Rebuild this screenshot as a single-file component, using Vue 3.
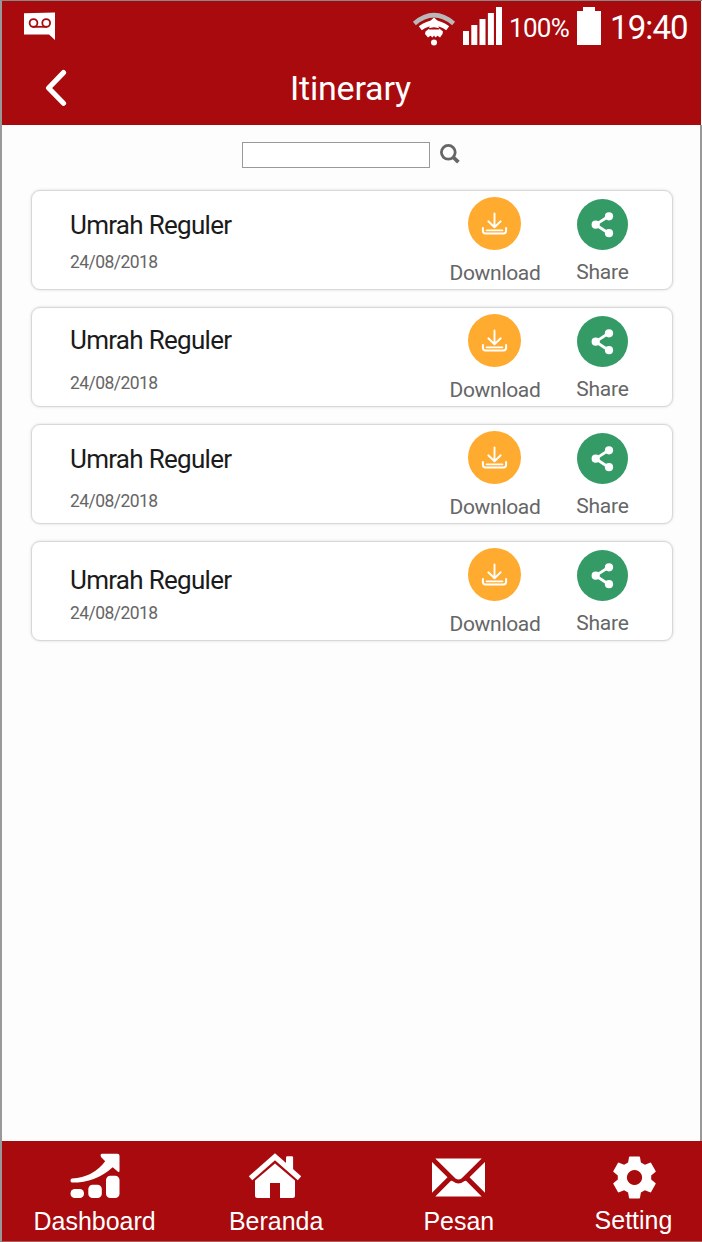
<script setup>
const items = [
  { title: 'Umrah Reguler', date: '24/08/2018', top: 21, gap: 14 },
  { title: 'Umrah Reguler', date: '24/08/2018', top: 19, gap: 20 },
  { title: 'Umrah Reguler', date: '24/08/2018', top: 21, gap: 19 },
  { title: 'Umrah Reguler', date: '24/08/2018', top: 25, gap: 10 },
]
</script>

<template>
  <div class="phone">
    <header class="top">
      <div class="status">
        <svg class="voicemail" width="31" height="29" viewBox="0 0 31 29">
          <path d="M0 1.2 31 0.5V28L25 22.6H0Z" fill="#fff" />
          <g fill="none" stroke="#a80a0e" stroke-width="1.8">
            <circle cx="9.5" cy="11" r="3.9" />
            <circle cx="22.2" cy="11" r="3.9" />
            <path d="M8.5 14.8H23" />
          </g>
        </svg>
        <svg class="wifi" width="44" height="36" viewBox="0 0 44 36">
          <path d="M2.4 13.4Q22-3.1 41.6 13.4" fill="none" stroke="#b9b9b9" stroke-width="4.6" />
          <path d="M8.3 18.3Q22 8 35.7 18.3" fill="none" stroke="#fff" stroke-width="5" />
          <path d="M22 7.5 28 13H16ZM18 14.5H26L27 18.2 31 21.5 30.5 24 28 27.5 25.5 25.8 23.5 27.5 22 25.6 20.5 27.5 18.5 25.8 16 27.5 13 24 13.5 21.5 17 18.8Z" fill="#fff" />
          <path d="M16.5 18.2 22 17.2 27.5 18.2 26.8 19.4H17.2Z" fill="#a80a0e" />
          <circle cx="22" cy="32.4" r="3" fill="#fff" />
        </svg>
        <svg class="signal" width="40" height="38" viewBox="0 0 40 38" fill="#fff">
          <path d="M0 24h6v14H0zM8.3 18h6v20h-6zM16.5 12h6v26h-6zM24.9 6h6v32h-6zM33 0h6v38h-6z" />
        </svg>
        <span class="percent">100%</span>
        <svg class="battery" width="24" height="38" viewBox="0 0 24 38" fill="#fff">
          <path d="M6 0h12v4h6v34H0V4h6z" />
        </svg>
        <span class="clock">19:40</span>
      </div>
      <div class="titlebar">
        <svg class="back" width="22" height="38" viewBox="0 0 22 38">
          <path d="M18.5 3.6 3.6 19 18.5 34.2" fill="none" stroke="#fff" stroke-width="5.2" stroke-linecap="round" stroke-linejoin="round" />
        </svg>
        <h1>Itinerary</h1>
      </div>
    </header>

    <main>
      <div class="search">
        <input type="text" aria-label="Search" />
        <svg width="20" height="20" viewBox="0 0 20 20" fill="none" stroke="#666">
          <circle cx="8.3" cy="8.3" r="6.9" stroke-width="2.8" />
          <path d="m13 13 5.4 5.2" stroke-width="3.8" />
        </svg>
      </div>

      <section class="list">
        <article v-for="(item, i) in items" :key="i" class="card">
          <div class="info" :style="{ paddingTop: item.top + 'px', rowGap: item.gap + 'px' }">
            <h2>{{ item.title }}</h2>
            <time>{{ item.date }}</time>
          </div>
          <div class="action download">
            <svg width="53" height="53" viewBox="0 0 53 53">
              <circle cx="26.5" cy="26.5" r="26.5" fill="#ffab30" />
              <g fill="none" stroke="#fff" stroke-linecap="round" stroke-linejoin="round">
                <path d="M26.5 16.5v13M20.3 24.3l6.2 6 6.2-6" stroke-width="1.9" />
                <path d="M14.9 31v2.8q0 2.6 2.6 2.6h18q2.6 0 2.6-2.6V31" stroke-width="2" />
                <path d="M18.5 33.4h16" stroke-width="1.6" />
              </g>
            </svg>
            <span>Download</span>
          </div>
          <div class="action share">
            <svg width="51" height="51" viewBox="0 0 51 51">
              <circle cx="25.5" cy="25.5" r="25.5" fill="#349b66" />
              <g fill="#fff">
                <path d="M32 17 18.7 25.7 32 34.5" fill="none" stroke="#fff" stroke-width="2.8" />
                <circle cx="18.7" cy="25.7" r="4.1" />
                <circle cx="32" cy="17.3" r="4.1" />
                <circle cx="32" cy="34.2" r="4.1" />
              </g>
            </svg>
            <span>Share</span>
          </div>
        </article>
      </section>
    </main>

    <nav>
      <a class="dash">
        <svg width="50" height="46" viewBox="0 0 50 46" fill="#fff">
          <rect x="0.5" y="36" width="13.5" height="9" rx="4.3" />
          <rect x="18.3" y="31.8" width="13.5" height="13.2" rx="4.3" />
          <rect x="36" y="22.8" width="13.5" height="22.2" rx="4.3" />
          <path d="M32.2.7H47.5Q49.5.7 49.5 2.7V17.5Q49.5 20 47.7 18.6L42.7 14.2Q26 29.5 2 29.6.5 29.6.5 27.6T2 25.5Q23 24.5 35.2 8.3L31 4Q29.8.7 32.2.7Z" />
        </svg>
        <span>Dashboard</span>
      </a>
      <a class="home">
        <svg width="54" height="46" viewBox="0 0 54 46" fill="#fff">
          <path d="M2.5 25.3 27 3.8 51.5 25.3" fill="none" stroke="#fff" stroke-width="5.2" stroke-linejoin="miter" />
          <path d="M38 4.5q0-1.3 1.3-1.3h4.5q1.3 0 1.3 1.3V20L38 13.5Z" />
          <path d="M27 10.5 47 27.5V42.5Q47 45 44.5 45H32V30H22V45H9.5Q7 45 7 42.5V27.5Z" />
        </svg>
        <span>Beranda</span>
      </a>
      <a class="mail">
        <svg width="53" height="39" viewBox="0 0 53 39" fill="#fff">
          <path d="M3.3.5H49.7L29.5 20.5Q26.5 22.7 23.5 20.5ZM0 4 15.5 19.3 0 34.7ZM53 4V34.7L37.5 19.3ZM3.3 38.4 18.7 23Q20 22.3 21.2 23.5 26.5 27.5 31.8 23.5 33 22.3 34.3 23L49.7 38.4Z" />
        </svg>
        <span>Pesan</span>
      </a>
      <a class="gear">
        <svg width="43" height="43" viewBox="0 0 43 43">
          <path fill="#fff" fill-rule="evenodd" d="M16.8.5h9.4q.7 0 .8.7l.9 5.2 4 2.3 5-2q.8-.3 1.2.4l4.5 7.8q.4.7-.2 1.2l-4.2 3.3v4.2l4.2 3.3q.6.5.2 1.2l-4.5 7.8q-.4.7-1.2.4l-5-2-4 2.3-.9 5.2q-.1.7-.8.7h-9.4q-.7 0-.8-.7l-.9-5.200-4-2.300-5 2q-.8.300-1.200-.400L.400 28.100Q0 27.400.600 26.900L4.800 23.600V19.400L.600 16.100Q0 15.600.400 14.900L4.900 7.100Q5.300 6.400 6.100 6.700L11.100 8.700 15.100 6.400 16 1.200Q16.100.5 16.800.5ZM21.500 13.900a7.600 7.600 0 1 0 .01 0Z" />
        </svg>
        <span>Setting</span>
      </a>
    </nav>
  </div>
</template>

<style>
body {
  margin: 0;
  background: #fdfdfd;
}
</style>

<style scoped>
.phone {
  box-sizing: border-box;
  width: 702px;
  height: 1242px;
  display: flex;
  flex-direction: column;
  border-left: 2px solid #999;
  border-top: 1px solid #888;
  border-bottom: 1px solid #a45c5e;
  background: #fdfdfd;
  font-family: Roboto, "Liberation Sans", sans-serif;
  overflow: hidden;
}
.top {
  height: 124px;
  margin-right: 1px;
  flex: none;
  background: #a80a0e;
  color: #fff;
}
.status {
  display: flex;
  align-items: flex-start;
  height: 50px;
}
svg {
  display: block;
  flex: none;
}
.voicemail { margin: 11px 0 0 22px; }
.wifi { margin: 9px 0 0 357px; }
.signal { margin: 6px 0 0 7px; }
.percent {
  width: 68px;
  margin: 12px 0 0 6px;
  font-size: 26px;
  line-height: 30px;
  letter-spacing: -0.7px;
}
.battery { margin: 6px 0 0 0; }
.clock {
  margin: 8px 0 0 9px;
  font-size: 33px;
  line-height: 38px;
  letter-spacing: -0.9px;
}
.titlebar {
  display: flex;
  align-items: flex-start;
}
.back { margin: 18px 0 0 43px; }
h1 {
  margin: 17px 0 0 223px;
  font-size: 34px;
  line-height: 40px;
  font-weight: 400;
  letter-spacing: -0.2px;
}
main {
  flex: 1;
  border-right: 2px solid #999;
}
.search {
  display: flex;
  gap: 10px;
  padding: 17px 0 0 240px;
}
.search input {
  box-sizing: border-box;
  width: 188px;
  height: 26px;
  padding: 0 4px;
  border: 1px solid #999;
  border-radius: 0;
  background: #fff;
  outline: none;
}
.search svg { margin-top: 2px; }
.list {
  display: flex;
  flex-direction: column;
  gap: 17px;
  padding: 22px 27px 0 29px;
}
.card {
  box-sizing: border-box;
  height: 100px;
  display: flex;
  align-items: flex-start;
  border: 1px solid #d8d8d8;
  border-radius: 9px;
  background: #fff;
  box-shadow: 0 0 3px rgba(0, 0, 0, 0.14);
}
.info {
  width: 370px;
  margin-left: 38px;
  display: grid;
}
h2 {
  margin: 0;
  font-size: 26px;
  line-height: 26px;
  font-weight: 400;
  letter-spacing: -0.7px;
  color: #1b1b1b;
}
time {
  font-size: 17.5px;
  line-height: 20px;
  letter-spacing: -0.55px;
  color: #666;
}
.action {
  display: flex;
  flex-direction: column;
  align-items: center;
  font-size: 21px;
  line-height: 24px;
  color: #666;
}
.download {
  width: 108px;
  padding-top: 6px;
}
.share {
  width: 108px;
  padding-top: 8px;
}
.download span { margin: 11px 0 0 2px; letter-spacing: -0.3px; }
.share span { margin: 10px 0 0 1px; letter-spacing: -0.2px; }
nav {
  height: 100px;
  flex: none;
  display: flex;
  align-items: flex-start;
  background: #a80a0e;
  color: #fff;
  font: 26px/30px "Liberation Sans", Arial, sans-serif;
}
nav a {
  flex: none;
  display: flex;
  flex-direction: column;
  align-items: center;
}
nav span { transform: scaleX(0.96); }
.dash { width: 186px; padding-top: 12px; }
.home { width: 176px; padding-top: 12px; }
.mail { width: 189px; padding-top: 17px; }
.gear { width: 130px; margin-left: 16px; padding-top: 15px; }
.home svg { margin-left: -2px; }
.dash span, .home span { margin-top: 7px; }
.mail span { margin-top: 9px; }
.gear span { margin-top: 6px; margin-left: -1px; }
</style>
